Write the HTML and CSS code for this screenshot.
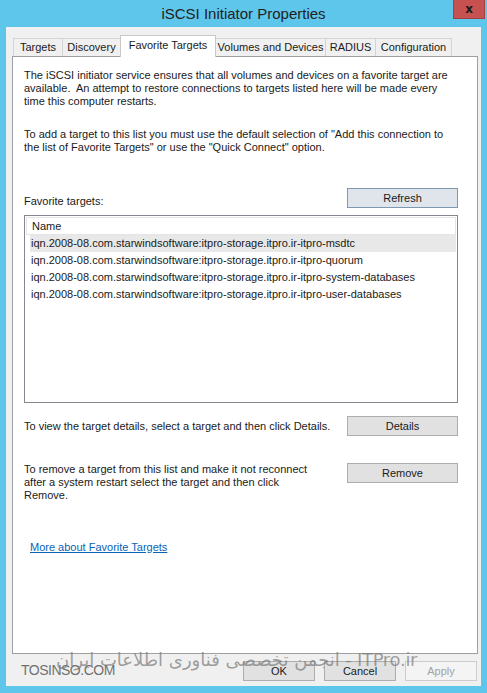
FILE: index.html
```html
<!DOCTYPE html>
<html lang="en">
<head>
    <meta charset="UTF-8">
    <meta name="viewport" content="width=device-width, initial-scale=1.0">
    <title>iSCSI Initiator Properties</title>
    <link rel="stylesheet" href="styles.css">
</head>
<body>
    <div class="window">
        <div class="titlebar">
            <span class="title">iSCSI Initiator Properties</span>
            <button class="close-btn">x</button>
        </div>

        <div class="client">
            <div class="tabs">
                <div class="tab tab-targets">Targets</div>
                <div class="tab tab-discovery">Discovery</div>
                <div class="tab tab-favorite active">Favorite Targets</div>
                <div class="tab tab-volumes">Volumes and Devices</div>
                <div class="tab tab-radius">RADIUS</div>
                <div class="tab tab-config">Configuration</div>
            </div>

            <div class="panel">
                <p class="intro">The iSCSI initiator service ensures that all volumes and devices on a favorite target are available.&nbsp; An attempt to restore connections to targets listed here will be made every time this computer restarts.</p>

                <p class="intro second">To add a target to this list you must use the default selection of "Add this connection to the list of Favorite Targets" or use the "Quick Connect" option.</p>

                <div class="row list-head">
                    <span>Favorite targets:</span>
                    <button class="btn focused">Refresh</button>
                </div>

                <div class="listbox">
                    <div class="list-header">Name</div>
                    <div class="list-item selected">iqn.2008-08.com.starwindsoftware:itpro-storage.itpro.ir-itpro-msdtc</div>
                    <div class="list-item">iqn.2008-08.com.starwindsoftware:itpro-storage.itpro.ir-itpro-quorum</div>
                    <div class="list-item">iqn.2008-08.com.starwindsoftware:itpro-storage.itpro.ir-itpro-system-databases</div>
                    <div class="list-item">iqn.2008-08.com.starwindsoftware:itpro-storage.itpro.ir-itpro-user-databases</div>
                </div>

                <div class="row details-row">
                    <span>To view the target details, select a target and then click Details.</span>
                    <button class="btn">Details</button>
                </div>

                <div class="row remove-row">
                    <span class="remove-text">To remove a target from this list and make it not reconnect after a system restart select the target and then click Remove.</span>
                    <button class="btn">Remove</button>
                </div>

                <a class="more-link" href="#">More about Favorite Targets</a>
            </div>

            <div class="footer">
                <button class="btn small">OK</button>
                <button class="btn small">Cancel</button>
                <button class="btn small" disabled>Apply</button>

                <span class="mark-site">TOSINSO.COM</span>
                <span class="mark-fa" dir="rtl">ITPro.ir - انجمن تخصصی فناوری اطلاعات ایران</span>
            </div>
        </div>
    </div>
</body>
</html>
```

FILE: styles.css
```css
body {
    margin: 0;
    padding: 0;
    background-color: #5ec6ea;
    font-family: 'Liberation Sans', Arial, sans-serif;
    font-size: 11px;
    color: #1a1a1a;
}

.window {
    width: 487px;
    height: 693px;
    display: flex;
    flex-direction: column;
}

.titlebar {
    position: relative;
    height: 27px;
    display: flex;
    justify-content: center;
    align-items: center;
}

.title {
    font-size: 15px;
    color: #222;
}

.close-btn {
    position: absolute;
    top: 0;
    right: 2px;
    width: 32px;
    height: 19px;
    background-color: #c75050;
    border: 1px solid #a04040;
    border-top: none;
    color: #1a1a1a;
    font-family: 'DejaVu Sans', sans-serif;
    font-weight: bold;
    font-size: 12px;
    line-height: 14px;
    padding: 0;
}

.client {
    flex: 1;
    margin: 0 6px 7px 6px;
    background-color: #f0f0f0;
    padding: 7px 3px 0 6px;
    display: flex;
    flex-direction: column;
    position: relative;
}

/* Tabs */
.tabs {
    display: flex;
    align-items: flex-end;
    padding-left: 1px;
    height: 22px;
}

.tab {
    box-sizing: border-box;
    height: 18px;
    line-height: 17px;
    border: 1px solid #d4d4d4;
    border-bottom: none;
    background-color: #f0f0f0;
    margin-right: -1px;
    white-space: nowrap;
    text-align: center;
}

.tab-targets { width: 50px; }
.tab-discovery { width: 59px; }
.tab-favorite { width: 96px; }
.tab-volumes { width: 111px; }
.tab-radius { width: 51px; }
.tab-config { width: 77px; }

.tab.active {
    height: 22px;
    line-height: 19px;
    background-color: #fff;
    border-color: #c8c8c8;
    position: relative;
    z-index: 1;
    margin-bottom: -1px;
}

.panel {
    height: 584px;
    background-color: #fff;
    border: 1px solid #a0a0a0;
    padding: 12px 19px 0 11px;
    line-height: 13px;
}

.intro {
    margin: 0;
}

.intro.second {
    margin-top: 20px;
}

.row {
    display: flex;
    justify-content: space-between;
}

.list-head {
    margin-top: 34px;
    align-items: flex-end;
}

.btn {
    width: 111px;
    height: 20px;
    background-color: #e1e1e1;
    border: 1px solid #adadad;
    font-family: 'Liberation Sans', Arial, sans-serif;
    font-size: 11px;
    color: #1a1a1a;
    padding: 0;
}

.btn.focused {
    background-color: #dfe5eb;
    border-color: #7e98b1;
}

.btn.small {
    width: 72px;
}

.btn:disabled {
    background-color: #f4f4f4;
    border-color: #cccccc;
    color: #a3a3a3;
}

.listbox {
    margin-top: 7px;
    height: 185px;
    border: 1px solid #828790;
    padding: 1px 1px 0 1px;
}

.list-header {
    height: 16px;
    line-height: 16px;
    border: 1px solid #e5e5e5;
    padding-left: 5px;
}

.list-item {
    height: 17px;
    line-height: 16px;
    margin-left: 4px;
    padding-left: 1px;
    white-space: nowrap;
}

.list-item.selected {
    background-color: #e8e8e8;
}

.details-row {
    margin-top: 13px;
    align-items: center;
}

.remove-row {
    margin-top: 27px;
    align-items: flex-start;
}

.remove-text {
    width: 300px;
}

.more-link {
    display: inline-block;
    margin-top: 39px;
    margin-left: 6px;
    color: #0a63b5;
}

/* Bottom buttons */
.footer {
    display: flex;
    justify-content: flex-end;
    gap: 9px;
    padding: 7px 1px 0 0;
}

.mark-site {
    position: absolute;
    left: 15px;
    bottom: 8px;
    font-size: 14px;
    color: #707070;
    letter-spacing: -0.5px;
}

.mark-fa {
    position: absolute;
    left: 50px;
    bottom: 16px;
    font-family: 'DejaVu Sans', sans-serif;
    font-size: 18px;
    color: rgba(120, 120, 120, 0.7);
    white-space: nowrap;
    letter-spacing: -0.3px;
}
```
